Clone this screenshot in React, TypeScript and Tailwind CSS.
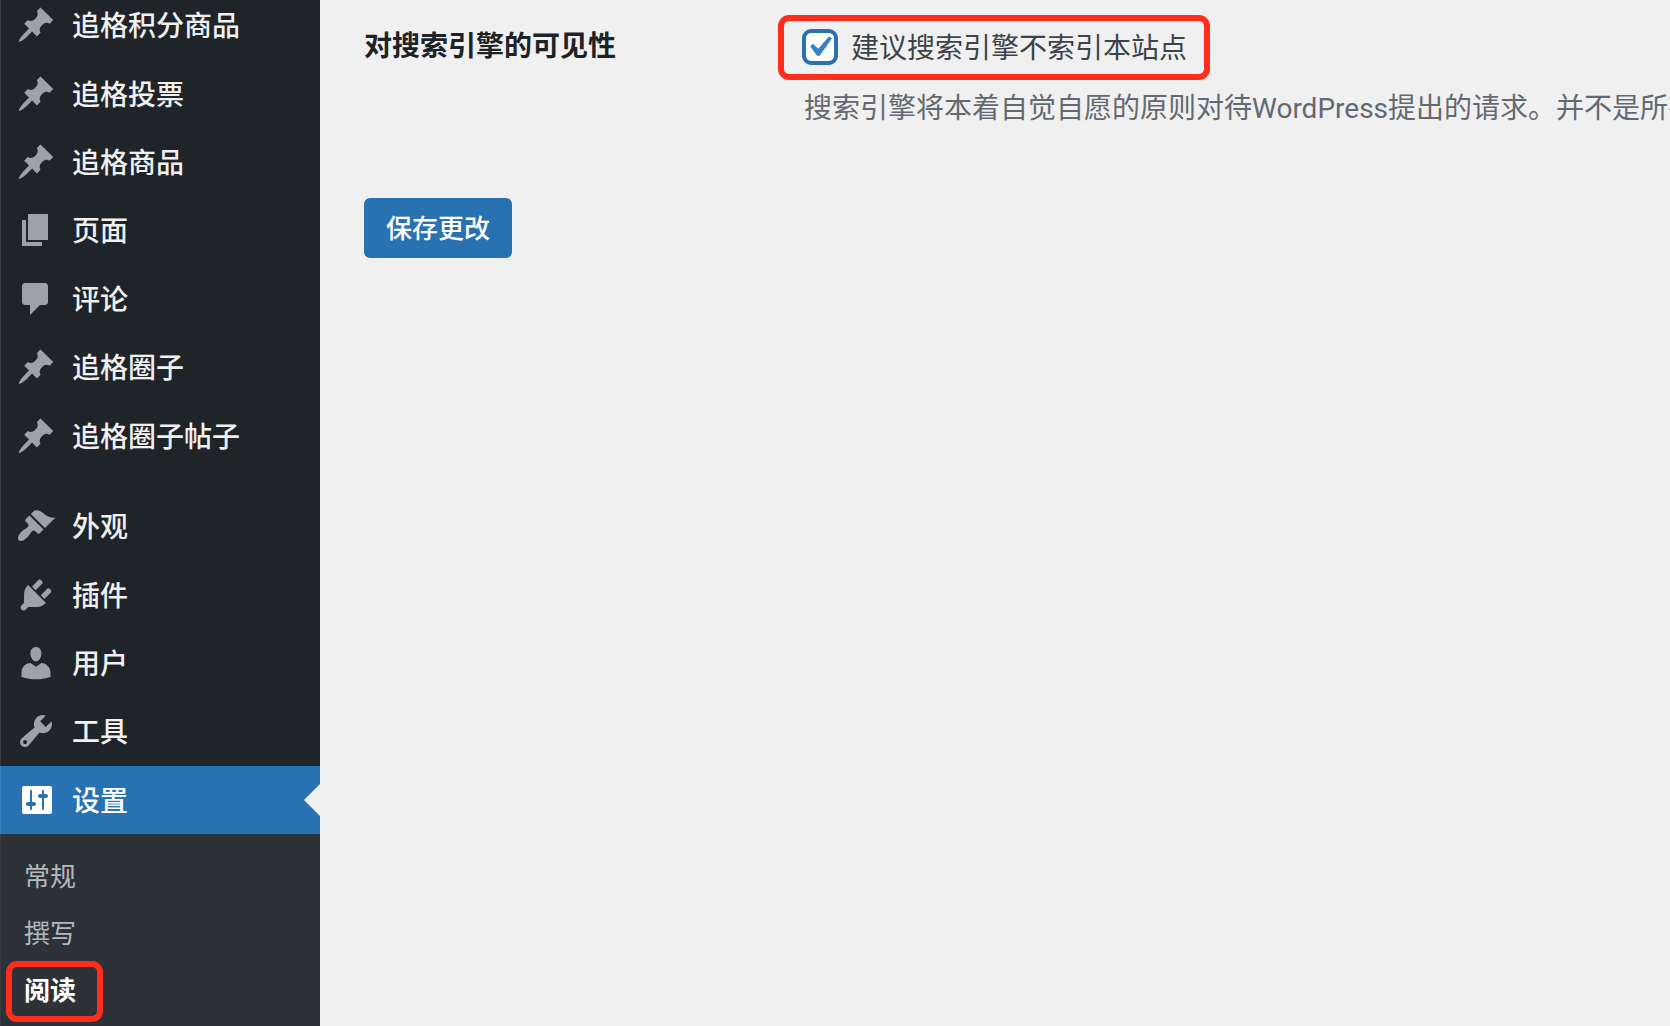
import { useState } from "react";

const ICONS = {
  pin: "M10.44 3.02l1.82-1.82 6.36 6.35-1.83 1.82c-1.05-.68-2.48-.57-3.41.36l-.75.75c-.92.93-1.04 2.35-.35 3.41l-1.83 1.82-2.41-2.41-2.8 2.79c-.42.42-3.38 2.71-3.8 2.29s1.86-3.39 2.28-3.81l2.79-2.79L4.1 9.36l1.83-1.82c1.05.69 2.48.57 3.4-.36l.75-.75c.93-.92 1.05-2.35.36-3.41z",
  page: "M6 15V2h10v13H6zm-1 1h8v2H3V5h2v11z",
  comment: "M4.5 2h10c.83 0 1.5.67 1.5 1.5v8c0 .83-.67 1.5-1.5 1.5H12l-5 5v-5H4.5c-.83 0-1.5-.67-1.5-1.5v-8C3 2.67 3.67 2 4.5 2z",
  brush:
    "M14.48 11.06L7.41 3.99l1.5-1.5c.5-.56 2.3-.47 3.51.32 1.21.8 1.43 1.28 2.91 2.1 1.18.64 2.45 1.26 4.45.85zm-.71.71L6.7 4.7 4.93 6.47c-.39.39-.39 1.02 0 1.41l1.06 1.06c.39.39.39 1.03 0 1.42-.6.6-1.43 1.11-2.21 1.69-.35.26-.7.53-1.01.84C1.43 14.23.4 16.08 1.4 17.07c.99 1 2.84-.03 4.18-1.36.31-.31.58-.66.85-1.02.57-.78 1.08-1.61 1.69-2.21.39-.39 1.02-.39 1.41 0l1.06 1.06c.39.39 1.02.39 1.41 0z",
  plug: "M13.11 4.36L9.87 7.6 8 5.73l3.24-3.24c.35-.34 1.05-.2 1.56.32.52.51.66 1.21.31 1.55zm-8 1.77l.91-1.12 9.01 9.01-1.19.84c-.71.71-2.63 1.16-3.82 1.16H6.14L4.9 17.26c-.59.59-1.54.59-2.12 0-.59-.58-.59-1.53 0-2.12l1.24-1.24v-3.88c0-1.13.4-3.19 1.09-3.89zm7.26 3.97l3.24-3.24c.34-.35 1.04-.21 1.55.31.52.51.66 1.21.31 1.55l-3.24 3.25z",
  user: "M10 9.25c-2.27 0-2.73-3.44-2.73-3.44C7 4.02 7.82 2 9.97 2c2.16 0 2.98 2.02 2.71 3.81 0 0-.41 3.44-2.68 3.44zm0 2.57L12.72 10c2.39 0 4.52 2.33 4.52 4.53v2.49s-3.65 1.13-7.24 1.13c-3.65 0-7.24-1.13-7.24-1.13v-2.49c0-2.25 1.94-4.48 4.47-4.48z",
  wrench:
    "M16.68 9.77c-1.34 1.34-3.3 1.67-4.95.99l-5.41 6.52c-.99.99-2.59.99-3.58 0s-.99-2.59 0-3.57l6.52-5.42c-.68-1.65-.35-3.61.99-4.95 1.28-1.28 3.12-1.62 4.72-1.06l-2.89 2.89 2.82 2.82 2.86-2.87c.53 1.58.18 3.39-1.08 4.65zM3.81 16.21c.4.39 1.04.39 1.43 0 .4-.4.4-1.04 0-1.43-.39-.4-1.03-.4-1.43 0-.39.39-.39 1.03 0 1.43z",
  sliders:
    "M18 16V4c0-.55-.45-1-1-1H4c-.55 0-1 .45-1 1v12c0 .55.45 1 1 1h13c.55 0 1-.45 1-1zM8 11h1c.55 0 1 .45 1 1s-.45 1-1 1H8v1.5c0 .28-.22.5-.5.5s-.5-.22-.5-.5V13H6c-.55 0-1-.45-1-1s.45-1 1-1h1V5.5c0-.28.22-.5.5-.5s.5.22.5.5V11zm5-2h-1c-.55 0-1-.45-1-1s.45-1 1-1h1V5.5c0-.28.22-.5.5-.5s.5.22.5.5V7h1c.55 0 1 .45 1 1s-.45 1-1 1h-1v5.5c0 .28-.22.5-.5.5s-.5-.22-.5-.5V9z",
};

type MenuEntry = { label: string; icon: keyof typeof ICONS };

const contentMenu: MenuEntry[] = [
  { label: "追格积分商品", icon: "pin" },
  { label: "追格投票", icon: "pin" },
  { label: "追格商品", icon: "pin" },
  { label: "页面", icon: "page" },
  { label: "评论", icon: "comment" },
  { label: "追格圈子", icon: "pin" },
  { label: "追格圈子帖子", icon: "pin" },
];

const adminMenu: MenuEntry[] = [
  { label: "外观", icon: "brush" },
  { label: "插件", icon: "plug" },
  { label: "用户", icon: "user" },
  { label: "工具", icon: "wrench" },
  { label: "设置", icon: "sliders" },
];

function MenuItem({ item, active }: { item: MenuEntry; active?: boolean }) {
  return (
    <li
      className={
        active ? "relative -ml-px border-l border-white/10 bg-[#2872b1] text-white" : "text-[#f0f0f1]"
      }
    >
      <a href="#" className="flex h-full items-center gap-4 pl-[15px] text-[28px] leading-9 font-medium">
        <svg
          viewBox="0 0 20 20"
          fillRule="evenodd"
          className={active ? "size-10 fill-white" : "size-10 fill-[#9ca2a7]"}
        >
          <path d={ICONS[item.icon]} />
        </svg>
        <span className="pt-0.5">{item.label}</span>
      </a>
      {/* Notch pointing at the current page */}
      {active && (
        <svg viewBox="0 0 16 32" className="absolute top-[18px] right-0 h-8 w-4 fill-[#f0f0f0]">
          <path d="M16 0v32L0 16z" />
        </svg>
      )}
    </li>
  );
}

function Sidebar() {
  return (
    <nav className="-mt-[9px] flex w-80 shrink-0 flex-col border-l border-[#363b40] bg-[#1f2428]">
      <ul className="grid h-[479px] auto-rows-fr">
        {contentMenu.map((item) => (
          <MenuItem key={item.label} item={item} />
        ))}
      </ul>
      <ul className="mt-[22px] grid h-[342px] auto-rows-fr">
        {adminMenu.map((item) => (
          <MenuItem key={item.label} item={item} active={item.label === "设置"} />
        ))}
      </ul>

      {/* Settings submenu */}
      <ul className="flex-1 bg-[#2c3238] pt-[14px] text-[26px] leading-[57px] text-[#b4b9be]">
        <li>
          <a href="#" className="block pl-[23px]">常规</a>
        </li>
        <li>
          <a href="#" className="block pl-[23px]">撰写</a>
        </li>
        <li className="relative font-bold text-white">
          <a href="#" className="block pl-[23px]">阅读</a>
          <span className="pointer-events-none absolute -top-px left-[5px] h-[61px] w-[97px] rounded-[11px] border-6 border-[#ff2d1e]" />
        </li>
      </ul>
    </nav>
  );
}

function ReadingForm() {
  const [discourage, setDiscourage] = useState(true);

  return (
    <form className="min-w-0 flex-1 overflow-hidden pt-[15px] pl-11" onSubmit={(e) => e.preventDefault()}>
      <div className="flex text-[28px] leading-9">
        <h2 className="w-[414px] shrink-0 pt-[13px] font-bold text-[#1d2327]">对搜索引擎的可见性</h2>
        <div className="min-w-0 flex-1 whitespace-nowrap">
          <label className="flex h-[65px] w-[432px] items-center gap-[13px] rounded-[11px] border-6 border-[#ff2d1e] pb-0.5 pl-[18px] text-[#3c434a]">
            <span className="relative size-9 shrink-0">
              <input
                type="checkbox"
                checked={discourage}
                onChange={(e) => setDiscourage(e.target.checked)}
                className="block size-9 appearance-none rounded-[9px] border-4 border-[#2872b1] bg-white"
              />
              {discourage && (
                <svg
                  viewBox="0 0 20 20"
                  className="pointer-events-none absolute -top-[3px] -left-1 size-[42px] fill-[#3582c4]"
                >
                  <path d="M14.83 4.89l1.34.94-5.81 8.38H9.02L5.78 9.67l1.34-1.25 2.57 2.4z" />
                </svg>
              )}
            </span>
            <span className="pt-0.5">建议搜索引擎不索引本站点</span>
          </label>
          <p className="mt-[11px] pl-[26px] font-['Roboto','Noto_Sans_CJK_SC',sans-serif] text-[#646970]">
            搜索引擎将本着自觉自愿的原则对待WordPress提出的请求。并不是所有
          </p>
        </div>
      </div>
      <button
        type="submit"
        className="mt-[71px] h-[60px] rounded-md bg-[#2872b1] px-[22px] pt-0.5 text-[26px] leading-9 font-medium text-white"
      >
        保存更改
      </button>
    </form>
  );
}

export default function App() {
  return (
    <div className="flex min-h-screen overflow-hidden bg-[#f0f0f0] font-['Inter','Noto_Sans_CJK_SC',sans-serif]">
      <Sidebar />
      <ReadingForm />
    </div>
  );
}
